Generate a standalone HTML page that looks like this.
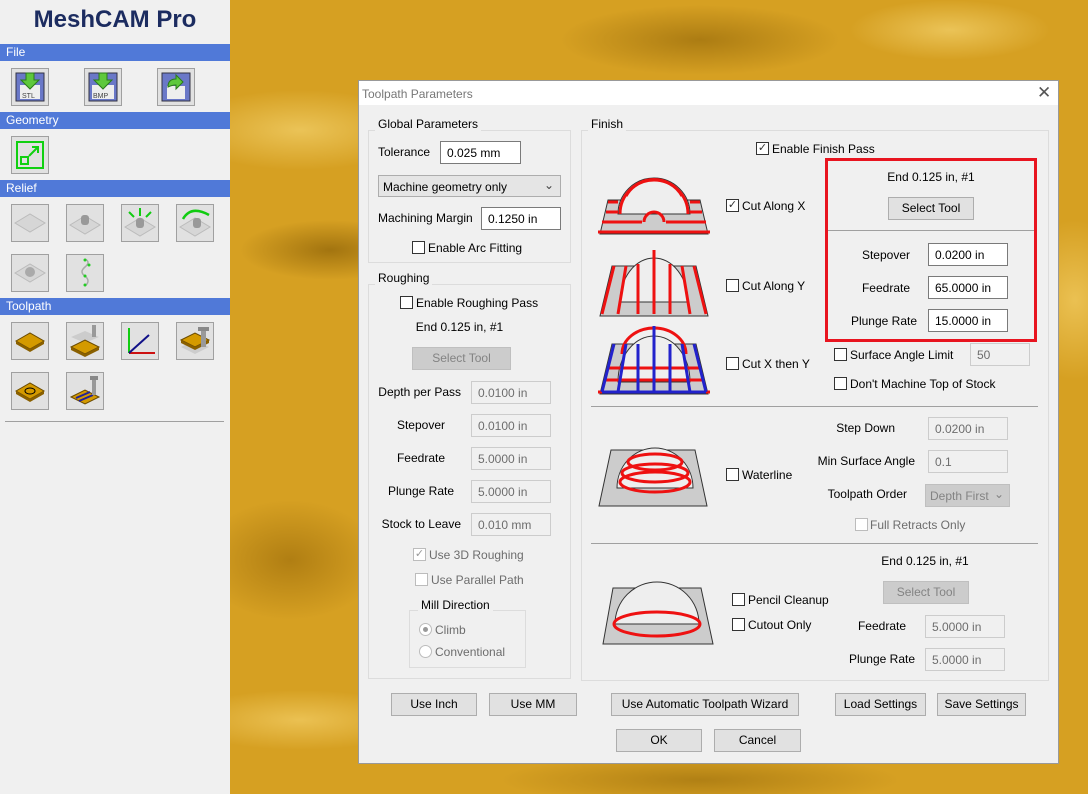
<!DOCTYPE html>
<html><head><meta charset="utf-8"><style>
*{box-sizing:border-box;margin:0;padding:0}
body{width:1088px;height:794px;position:relative;overflow:hidden;font:12px "Liberation Sans",sans-serif;color:#000;
background:
radial-gradient(ellipse 90px 30px at 330px 250px,rgba(120,80,0,.55),transparent),
radial-gradient(ellipse 120px 40px at 300px 130px,rgba(255,230,140,.5),transparent),
radial-gradient(ellipse 140px 35px at 700px 40px,rgba(120,80,0,.45),transparent),
radial-gradient(ellipse 100px 30px at 950px 30px,rgba(255,230,140,.5),transparent),
radial-gradient(ellipse 90px 60px at 290px 560px,rgba(130,85,0,.45),transparent),
radial-gradient(ellipse 120px 30px at 300px 720px,rgba(255,225,130,.5),transparent),
radial-gradient(ellipse 200px 25px at 700px 780px,rgba(120,80,0,.4),transparent),
radial-gradient(ellipse 60px 80px at 1075px 300px,rgba(255,225,130,.5),transparent),
#d6a022}
.a{position:absolute}
.t{position:absolute;white-space:nowrap;line-height:14px}
.r{text-align:right}
.in{position:absolute;background:#fff;border:1px solid #7a7a7a;height:23px;padding:4px 0 0 6px;white-space:nowrap}
.dis{background:#f0f0f0;border-color:#cccccc;color:#6d6d6d}
.btn{position:absolute;background:#e1e1e1;border:1px solid #adadad;height:23px;text-align:center;line-height:21px;white-space:nowrap}
.bd{background:#cccccc;border-color:#bfbfbf;color:#838383}
.cb{position:absolute;width:13px;height:13px;border:1px solid #333;background:#fff}
.cbd{border-color:#bcbcbc}
.grp{position:absolute;border:1px solid #dcdcdc}
.gt{position:absolute;background:#f0f0f0;padding:0 3px;white-space:nowrap;line-height:14px}
.bar{position:absolute;left:0;width:230px;height:17px;background:#5079d8;color:#fff;font-size:12px;padding-left:6px;line-height:17px}
.ib{position:absolute;width:38px;height:38px;border:1px solid #a0a0a0;background:#e1e1e1}
.ib svg{position:absolute;left:0;top:0}
</style></head><body>

<div class="a" style="left:0;top:0;width:230px;height:794px;background:#f0f0f0"></div>
<div class="t" style="left:0;top:6px;width:230px;text-align:center;font:bold 24px 'Liberation Sans',sans-serif;line-height:28px;color:#1c2c60">MeshCAM Pro</div>
<div class="bar" style="top:44px">File</div>
<div class="bar" style="top:112px">Geometry</div>
<div class="bar" style="top:180px">Relief</div>
<div class="bar" style="top:298px">Toolpath</div>

<div class="ib" style="left:11px;top:68px"><svg width="36" height="36"><rect x="4" y="4" width="28" height="28" fill="#6a78c8" stroke="#334"/><rect x="8" y="16" width="20" height="14" fill="#eee"/><path d="M14 4h8v7h5l-9 9-9-9h5z" fill="#5ec83c" stroke="#2a7a1a"/><text x="10" y="29" font-size="7" fill="#444">STL</text></svg></div>
<div class="ib" style="left:84px;top:68px"><svg width="36" height="36"><rect x="4" y="4" width="28" height="28" fill="#6a78c8" stroke="#334"/><rect x="7" y="16" width="22" height="14" fill="#eee"/><path d="M14 4h8v7h5l-9 9-9-9h5z" fill="#5ec83c" stroke="#2a7a1a"/><text x="8" y="29" font-size="7" fill="#444">BMP</text></svg></div>
<div class="ib" style="left:157px;top:68px"><svg width="36" height="36"><rect x="4" y="4" width="28" height="28" fill="#6a78c8" stroke="#334"/><rect x="9" y="17" width="18" height="13" fill="#eee"/><path d="M10 18q0-8 8-8v-4l7 7-7 7v-4q-4 0-8 2z" fill="#5ec83c" stroke="#2a7a1a"/></svg></div>
<div class="ib" style="left:11px;top:136px"><svg width="36" height="36"><rect x="5" y="5" width="26" height="26" fill="none" stroke="#10d010" stroke-width="2"/><rect x="9" y="20" width="7" height="7" fill="none" stroke="#10d010" stroke-width="2"/><path d="M17 19l9-9M20 10h6v6" stroke="#10d010" stroke-width="2" fill="none"/></svg></div>

<div class="ib" style="left:11px;top:204px"><svg width="36" height="36"><path d="M3 18l15-9 15 9-15 9z" fill="#d6d6d6" stroke="#bbb"/></svg></div>
<div class="ib" style="left:66px;top:204px"><svg width="36" height="36"><path d="M3 20l15-9 15 9-15 9z" fill="#d6d6d6" stroke="#bbb"/><rect x="14" y="10" width="8" height="10" rx="3" fill="#999"/></svg></div>
<div class="ib" style="left:121px;top:204px"><svg width="36" height="36"><path d="M3 22l15-9 15 9-15 9z" fill="#d6d6d6" stroke="#bbb"/><rect x="14" y="13" width="8" height="10" rx="3" fill="#999"/><path d="M18 11V3M12 12l-5-5M24 12l5-5" stroke="#1c1" stroke-width="2"/></svg></div>
<div class="ib" style="left:176px;top:204px"><svg width="36" height="36"><path d="M3 22l15-9 15 9-15 9z" fill="#d6d6d6" stroke="#bbb"/><rect x="16" y="13" width="8" height="10" rx="3" fill="#999"/><path d="M6 14q8-14 26-4" stroke="#1c1" stroke-width="2.5" fill="none"/></svg></div>
<div class="ib" style="left:11px;top:254px"><svg width="36" height="36"><path d="M3 18l15-9 15 9-15 9z" fill="#d6d6d6" stroke="#bbb"/><circle cx="18" cy="17" r="5" fill="#aaa"/></svg></div>
<div class="ib" style="left:66px;top:254px"><svg width="36" height="36"><path d="M18 4q6 3 0 8q-6 5 0 9q6 5 0 10" stroke="#aaa" fill="none" stroke-width="1.5"/><circle cx="18" cy="5" r="1.5" fill="#2c2"/><circle cx="22" cy="10" r="1.5" fill="#2c2"/><circle cx="18" cy="21" r="1.5" fill="#2c2"/><circle cx="18" cy="30" r="1.5" fill="#2c2"/></svg></div>

<div class="ib" style="left:11px;top:322px"><svg width="36" height="36"><path d="M4 18l14-8 14 8-14 8z" fill="#d49a00" stroke="#6a4a00"/><path d="M4 18v3l14 8 14-8v-3l-14 8z" fill="#8a6000"/></svg></div>
<div class="ib" style="left:66px;top:322px"><svg width="36" height="36"><path d="M4 14l14-6 14 6-14 6z" fill="#ccc"/><rect x="25" y="2" width="4" height="12" fill="#999"/><path d="M4 24l14-7 14 7-14 7z" fill="#d49a00" stroke="#6a4a00"/><path d="M4 24v3l14 7 14-7v-3l-14 7z" fill="#8a6000"/></svg></div>
<div class="ib" style="left:121px;top:322px"><svg width="36" height="36"><path d="M7 30V5" stroke="#1c1" stroke-width="2"/><path d="M7 30h26" stroke="#c11" stroke-width="2"/><path d="M7 30L27 12" stroke="#118" stroke-width="2"/></svg></div>
<div class="ib" style="left:176px;top:322px"><svg width="36" height="36"><path d="M4 24l14-7 14 7-14 7z" fill="#ccc"/><path d="M4 17l14-7 14 7-14 7z" fill="#d49a00" stroke="#6a4a00"/><path d="M4 17v3l14 7 14-7v-3l-14 7z" fill="#8a6000"/><rect x="24" y="4" width="5" height="20" fill="#999"/><rect x="21" y="4" width="11" height="4" fill="#888"/></svg></div>
<div class="ib" style="left:11px;top:372px"><svg width="36" height="36"><path d="M4 18l14-8 14 8-14 8z" fill="#d49a00" stroke="#6a4a00"/><path d="M4 18v3l14 8 14-8v-3l-14 8z" fill="#8a6000"/><ellipse cx="18" cy="18" rx="5" ry="3" fill="none" stroke="#000"/></svg></div>
<div class="ib" style="left:66px;top:372px"><svg width="36" height="36"><path d="M4 24l14-7 14 7-14 7z" fill="#d49a00" stroke="#6a4a00"/><path d="M9 25l14-6M12 28l14-6" stroke="#229" stroke-width="2"/><rect x="25" y="4" width="4" height="18" fill="#999"/><rect x="23" y="3" width="8" height="4" fill="#888"/></svg></div>
<div class="a" style="left:5px;top:421px;width:219px;height:1px;background:#a0a0a0"></div>

<div class="a" style="left:358px;top:80px;width:701px;height:684px;background:#f0f0f0;border:1px solid #999"></div>
<div class="a" style="left:359px;top:81px;width:699px;height:24px;background:#fff"></div>
<div class="t" style="left:362px;top:87px;color:#777">Toolpath Parameters</div>
<div class="t" style="left:1037px;top:84px;font-size:17px;line-height:18px;color:#555">✕</div>

<div class="grp" style="left:368px;top:130px;width:203px;height:133px"></div>
<div class="gt" style="left:375px;top:117px">Global Parameters</div>
<div class="t" style="left:378px;top:145px">Tolerance</div>
<div class="in" style="left:440px;top:141px;width:81px">0.025 mm</div>
<div class="a" style="left:378px;top:175px;width:183px;height:22px;background:#e5e5e5;border:1px solid #adadad;padding:4px 0 0 4px">Machine geometry only<span style="position:absolute;right:6px;top:2px;color:#444">⌄</span></div>
<div class="t" style="left:378px;top:211px">Machining Margin</div>
<div class="in" style="left:481px;top:207px;width:80px">0.1250 in</div>
<div class="cb" style="left:412px;top:241px"></div>
<div class="t" style="left:428px;top:241px">Enable Arc Fitting</div>

<div class="grp" style="left:368px;top:284px;width:203px;height:395px"></div>
<div class="gt" style="left:375px;top:271px">Roughing</div>
<div class="cb" style="left:400px;top:296px"></div>
<div class="t" style="left:416px;top:296px">Enable Roughing Pass</div>
<div class="t" style="left:368px;top:320px;width:183px;text-align:center">End 0.125 in, #1</div>
<div class="btn bd" style="left:412px;top:347px;width:99px">Select Tool</div>
<div class="t r" style="left:368px;top:385px;width:93px">Depth per Pass</div>
<div class="in dis" style="left:471px;top:381px;width:80px">0.0100 in</div>
<div class="t r" style="left:368px;top:418px;width:77px">Stepover</div>
<div class="in dis" style="left:471px;top:414px;width:80px">0.0100 in</div>
<div class="t r" style="left:368px;top:451px;width:77px">Feedrate</div>
<div class="in dis" style="left:471px;top:447px;width:80px">5.0000 in</div>
<div class="t r" style="left:368px;top:484px;width:86px">Plunge Rate</div>
<div class="in dis" style="left:471px;top:480px;width:80px">5.0000 in</div>
<div class="t r" style="left:368px;top:517px;width:93px">Stock to Leave</div>
<div class="in dis" style="left:471px;top:513px;width:80px">0.010 mm</div>
<div class="cb cbd" style="left:413px;top:548px;font-size:11px;line-height:11px;color:#999;text-align:center">✓</div>
<div class="t" style="left:429px;top:548px;color:#6d6d6d">Use 3D Roughing</div>
<div class="cb cbd" style="left:415px;top:573px"></div>
<div class="t" style="left:431px;top:573px;color:#6d6d6d">Use Parallel Path</div>
<div class="grp" style="left:409px;top:610px;width:117px;height:58px"></div>
<div class="gt" style="left:418px;top:598px">Mill Direction</div>
<div class="a" style="left:419px;top:623px;width:13px;height:13px;border:1px solid #bcbcbc;border-radius:50%;background:#fff"><div class="a" style="left:3px;top:3px;width:5px;height:5px;border-radius:50%;background:#999"></div></div>
<div class="t" style="left:435px;top:623px;color:#6d6d6d">Climb</div>
<div class="a" style="left:419px;top:645px;width:13px;height:13px;border:1px solid #bcbcbc;border-radius:50%;background:#fff"></div>
<div class="t" style="left:435px;top:645px;color:#6d6d6d">Conventional</div>

<div class="grp" style="left:581px;top:130px;width:468px;height:551px"></div>
<div class="gt" style="left:588px;top:117px">Finish</div>
<div class="cb" style="left:756px;top:142px;font-size:11px;line-height:11px;text-align:center;color:#333">✓</div>
<div class="t" style="left:772px;top:142px">Enable Finish Pass</div>

<svg class="a" style="left:594px;top:166px" width="120" height="72">
<path d="M6 68l8-34h92l8 34z" fill="#ccc" stroke="#333"/>
<path d="M24 48A36 36 0 0 1 96 48z" fill="#eee" stroke="#333"/>
<g fill="none" stroke="#e11" stroke-width="3">
<path d="M4 66h112M8 56h40M72 56h40M12 46h12M96 46h12M14 36h10M96 36h10"/>
<path d="M26 48A34 34 0 0 1 94 48"/>
<path d="M32 30A32 32 0 0 1 88 30"/>
<path d="M50 56A10 10 0 0 1 70 56"/>
</g></svg>
<svg class="a" style="left:594px;top:246px" width="120" height="72">
<path d="M6 70l12-50h84l12 50z" fill="#ccc" stroke="#333"/>
<path d="M26 56A34 44 0 0 1 94 56z" fill="#eee" stroke="#333"/>
<g stroke="#e11" stroke-width="3"><path d="M8 68l12-48M24 68l8-48M44 68V18M60 68V4M76 68V18M96 68l-8-48M112 68l-12-48"/></g></svg>
<svg class="a" style="left:594px;top:324px" width="120" height="72">
<path d="M6 70l12-50h84l12 50z" fill="#ccc" stroke="#333"/>
<path d="M24 58A36 46 0 0 1 96 58z" fill="#eee" stroke="#333"/>
<g fill="none" stroke="#e11" stroke-width="3"><path d="M4 68h112M10 56h100M14 44h92"/><path d="M28 30A32 26 0 0 1 92 30"/></g>
<g stroke="#22c" stroke-width="3"><path d="M8 68l12-48M24 68l8-48M44 68V20M60 68V2M76 68V20M96 68l-8-48M112 68l-12-48M8 68h104"/></g></svg>

<div class="cb" style="left:726px;top:199px;font-size:11px;line-height:11px;text-align:center;color:#333">✓</div>
<div class="t" style="left:742px;top:199px">Cut Along X</div>
<div class="cb" style="left:726px;top:279px"></div>
<div class="t" style="left:742px;top:279px">Cut Along Y</div>
<div class="cb" style="left:726px;top:357px"></div>
<div class="t" style="left:742px;top:357px">Cut X then Y</div>

<div class="a" style="left:825px;top:158px;width:212px;height:184px;border:3px solid #e8141f"></div>
<div class="t" style="left:828px;top:170px;width:206px;text-align:center">End 0.125 in, #1</div>
<div class="btn" style="left:888px;top:197px;width:86px">Select Tool</div>
<div class="a" style="left:828px;top:230px;width:206px;height:1px;background:#a0a0a0"></div>
<div class="t r" style="left:828px;top:248px;width:82px">Stepover</div>
<div class="in" style="left:928px;top:243px;width:80px">0.0200 in</div>
<div class="t r" style="left:828px;top:281px;width:82px">Feedrate</div>
<div class="in" style="left:928px;top:276px;width:80px">65.0000 in</div>
<div class="t r" style="left:828px;top:314px;width:89px">Plunge Rate</div>
<div class="in" style="left:928px;top:309px;width:80px">15.0000 in</div>

<div class="cb" style="left:834px;top:348px"></div>
<div class="t" style="left:850px;top:348px">Surface Angle Limit</div>
<div class="in dis" style="left:970px;top:343px;width:60px">50</div>
<div class="cb" style="left:834px;top:377px"></div>
<div class="t" style="left:850px;top:377px">Don't Machine Top of Stock</div>
<div class="a" style="left:591px;top:406px;width:447px;height:1px;background:#a0a0a0"></div>

<svg class="a" style="left:595px;top:440px" width="120" height="70">
<path d="M4 66l12-56h84l12 56z" fill="#ccc" stroke="#333"/>
<path d="M22 48A38 40 0 0 1 98 48z" fill="#eee" stroke="#333"/>
<g fill="none" stroke="#e11" stroke-width="3"><ellipse cx="60" cy="42" rx="35" ry="10"/><ellipse cx="60" cy="33" rx="33" ry="9"/><ellipse cx="60" cy="22" rx="27" ry="8"/></g></svg>
<div class="cb" style="left:726px;top:468px"></div>
<div class="t" style="left:742px;top:468px">Waterline</div>
<div class="t r" style="left:800px;top:421px;width:95px">Step Down</div>
<div class="in dis" style="left:928px;top:417px;width:80px">0.0200 in</div>
<div class="t r" style="left:800px;top:454px;width:115px">Min Surface Angle</div>
<div class="in dis" style="left:928px;top:450px;width:80px">0.1</div>
<div class="t r" style="left:800px;top:487px;width:107px">Toolpath Order</div>
<div class="a" style="left:925px;top:484px;width:85px;height:23px;background:#cccccc;border:1px solid #bfbfbf;color:#838383;padding:4px 0 0 4px">Depth First<span style="position:absolute;right:5px;top:2px">⌄</span></div>
<div class="cb cbd" style="left:855px;top:518px"></div>
<div class="t" style="left:870px;top:518px;color:#6d6d6d">Full Retracts Only</div>
<div class="a" style="left:591px;top:543px;width:447px;height:1px;background:#a0a0a0"></div>

<svg class="a" style="left:599px;top:578px" width="120" height="68">
<path d="M4 66l10-56h88l12 56z" fill="#ccc" stroke="#333"/>
<path d="M16 46A42 42 0 0 1 100 46z" fill="#eee" stroke="#333"/>
<ellipse cx="58" cy="46" rx="43" ry="12" fill="none" stroke="#e11" stroke-width="3"/></svg>
<div class="t" style="left:818px;top:554px;width:214px;text-align:center">End 0.125 in, #1</div>
<div class="btn bd" style="left:883px;top:581px;width:86px">Select Tool</div>
<div class="cb" style="left:732px;top:593px"></div>
<div class="t" style="left:748px;top:593px">Pencil Cleanup</div>
<div class="cb" style="left:732px;top:618px"></div>
<div class="t" style="left:748px;top:618px">Cutout Only</div>
<div class="t r" style="left:800px;top:619px;width:106px">Feedrate</div>
<div class="in dis" style="left:925px;top:615px;width:80px">5.0000 in</div>
<div class="t r" style="left:800px;top:652px;width:115px">Plunge Rate</div>
<div class="in dis" style="left:925px;top:648px;width:80px">5.0000 in</div>

<div class="btn" style="left:391px;top:693px;width:86px">Use Inch</div>
<div class="btn" style="left:489px;top:693px;width:88px">Use MM</div>
<div class="btn" style="left:611px;top:693px;width:188px">Use Automatic Toolpath Wizard</div>
<div class="btn" style="left:835px;top:693px;width:91px">Load Settings</div>
<div class="btn" style="left:937px;top:693px;width:89px">Save Settings</div>
<div class="btn" style="left:616px;top:729px;width:86px">OK</div>
<div class="btn" style="left:714px;top:729px;width:87px">Cancel</div>
</body></html>
